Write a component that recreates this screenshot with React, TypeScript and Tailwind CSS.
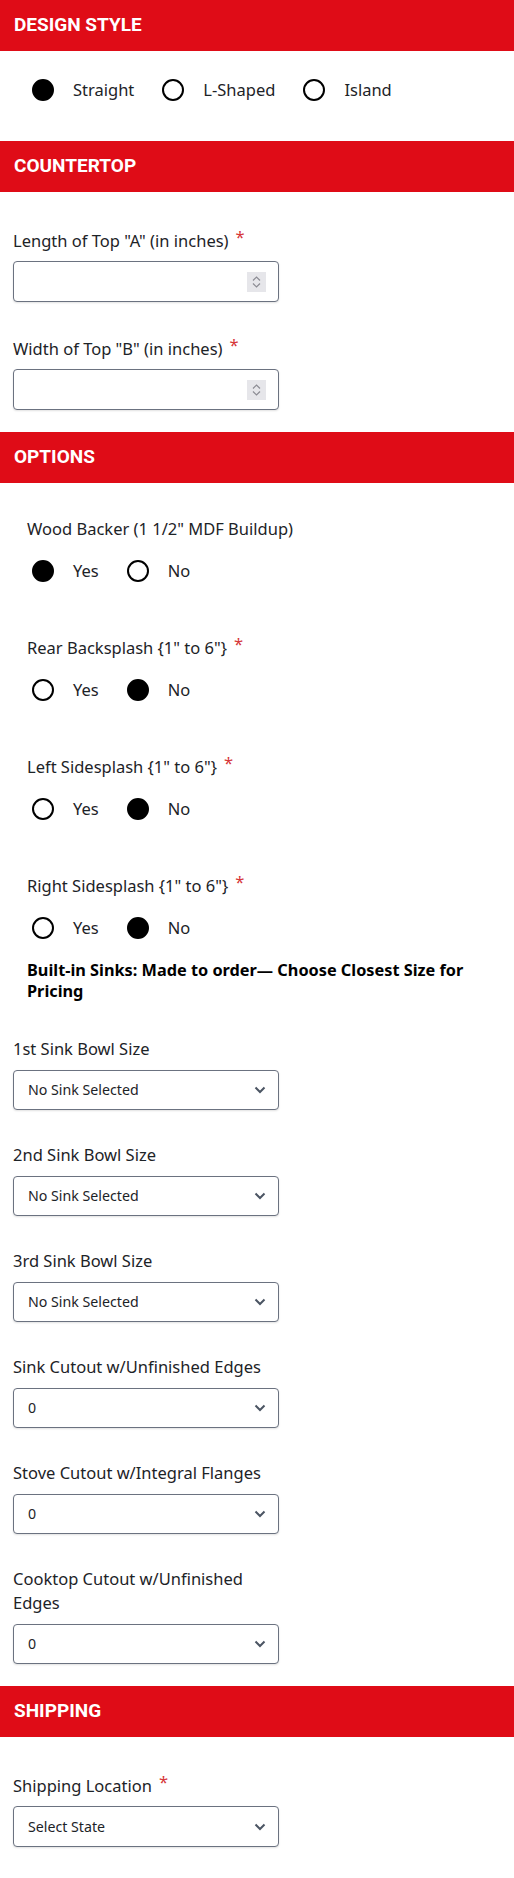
import React from "react";

const SANS = { fontFamily: '"Noto Sans", "Open Sans", sans-serif' };

function Header({ title }: { title: string }) {
  return (
    <div
      className="h-[51px] bg-[#df0c17] flex items-center px-[14px] text-white text-[19px] font-bold"
      style={{ fontFamily: 'Roboto, "Liberation Sans", sans-serif' }}
    >
      {title}
    </div>
  );
}

function Radio({ checked }: { checked: boolean }) {
  return (
    <span
      className={
        "inline-block w-[22px] h-[22px] rounded-full border-2 border-black shrink-0 " +
        (checked ? "bg-black" : "bg-white")
      }
    />
  );
}

function RadioRow({ options, selected }: { options: string[]; selected: number }) {
  return (
    <div className="flex items-center h-[22px] gap-[28px] pl-[5px]">
      {options.map((o, i) => (
        <div key={o} className="flex items-center gap-[19px]">
          <Radio checked={i === selected} />
          <span className="text-[16.5px] text-[#1d2327] leading-[24px]">{o}</span>
        </div>
      ))}
    </div>
  );
}

function Star() {
  return <span className="text-[#d63638] ml-[7px] relative top-[-4px]">*</span>;
}

function Label({ text, required }: { text: string; required?: boolean }) {
  return (
    <div className="text-[16.5px] leading-[24px] text-[#1d2327]">
      {text}
      {required && <Star />}
    </div>
  );
}

function NumberInput() {
  return (
    <div className="relative w-[266px] h-[41px] mt-[8px] border border-[#6b7280] rounded-[4px] bg-white shadow-[0_1px_2px_rgba(0,0,0,0.12)]">
      <div className="absolute right-[12px] top-[10px] w-[19px] h-[20px] bg-[#e6e6ea] flex flex-col items-center justify-center gap-[2px]">
        <svg width="9" height="5" viewBox="0 0 9 5" fill="none">
          <path d="M1 4.5L4.5 1L8 4.5" stroke="#8b8b93" strokeWidth="1.2" />
        </svg>
        <svg width="9" height="5" viewBox="0 0 9 5" fill="none">
          <path d="M1 0.5L4.5 4L8 0.5" stroke="#8b8b93" strokeWidth="1.2" />
        </svg>
      </div>
    </div>
  );
}

function Select({ value, h = 40, mt = 9 }: { value: string; h?: number; mt?: number }) {
  return (
    <div
      className={
        "relative w-[266px] border border-[#6b7280] rounded-[4px] bg-white flex items-center pl-[14px] shadow-[0_1px_2px_rgba(0,0,0,0.12)] " +
        (h === 41 ? "h-[41px] " : "h-[40px] ") +
        (mt === 8 ? "mt-[8px]" : "mt-[9px]")
      }
    >
      <span className="text-[14.2px] text-[#1d2327]">{value}</span>
      <svg
        className="absolute right-[12px] top-1/2 -translate-y-1/2"
        width="12"
        height="8"
        viewBox="0 0 12 8"
        fill="none"
      >
        <path d="M1.5 1.5L6 6L10.5 1.5" stroke="#4b5563" strokeWidth="2" />
      </svg>
    </div>
  );
}

function Field({ label, value, required }: { label: string; value: string; required?: boolean }) {
  return (
    <div className="w-[266px]">
      <Label text={label} required={required} />
      <Select value={value} />
    </div>
  );
}

export default function App() {
  return (
    <div className="w-[514px] h-[1878px] bg-white" style={SANS}>
      <Header title="DESIGN STYLE" />
      <div className="pt-[28px] pb-[40px] px-[27px]">
        <RadioRow options={["Straight", "L-Shaped", "Island"]} selected={0} />
      </div>

      <Header title="COUNTERTOP" />
      <div className="pt-[37px] pb-[22px] px-[13px]">
        <Label text={'Length of Top "A" (in inches)'} required />
        <NumberInput />
        <div className="mt-[35px]">
          <Label text={'Width of Top "B" (in inches)'} required />
          <NumberInput />
        </div>
      </div>

      <Header title="OPTIONS" />
      <div className="pt-[34px] pl-[27px] pr-[14px] flex flex-col gap-[54px]">
        <div className="flex flex-col gap-[19px]">
          <Label text={'Wood Backer (1 1/2" MDF Buildup)'} />
          <RadioRow options={["Yes", "No"]} selected={0} />
        </div>
        <div className="flex flex-col gap-[19px]">
          <Label text={'Rear Backsplash {1" to 6"}'} required />
          <RadioRow options={["Yes", "No"]} selected={1} />
        </div>
        <div className="flex flex-col gap-[19px]">
          <Label text={'Left Sidesplash {1" to 6"}'} required />
          <RadioRow options={["Yes", "No"]} selected={1} />
        </div>
        <div className="flex flex-col gap-[19px]">
          <Label text={'Right Sidesplash {1" to 6"}'} required />
          <RadioRow options={["Yes", "No"]} selected={1} />
        </div>
      </div>
      <div className="mt-[21px] pl-[27px] pr-[14px] text-[16.3px] leading-[21px] font-bold text-black">
        Built-in Sinks: Made to order— Choose Closest Size for Pricing
      </div>
      <div className="mt-[35px] px-[13px] pb-[22px] flex flex-col gap-[33px]">
        <Field label="1st Sink Bowl Size" value="No Sink Selected" />
        <Field label="2nd Sink Bowl Size" value="No Sink Selected" />
        <Field label="3rd Sink Bowl Size" value="No Sink Selected" />
        <Field label="Sink Cutout w/Unfinished Edges" value="0" />
        <Field label="Stove Cutout w/Integral Flanges" value="0" />
        <Field label="Cooktop Cutout w/Unfinished Edges" value="0" />
      </div>

      <Header title="SHIPPING" />
      <div className="pt-[37px] px-[13px] pb-[31px]">
        <div className="w-[266px]">
          <Label text="Shipping Location" required />
          <Select value="Select State" h={41} mt={8} />
        </div>
      </div>
    </div>
  );
}
